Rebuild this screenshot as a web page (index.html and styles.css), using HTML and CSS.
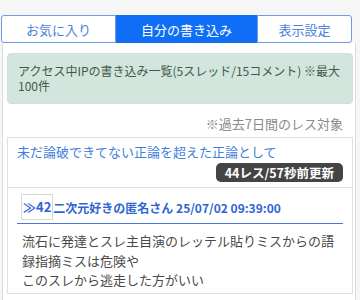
FILE: index.html
```html
<!DOCTYPE html>
<html lang="ja">

<head>
    <meta charset="utf-8" />
    <title>自分の書き込み</title>
    <link rel="stylesheet" href="styles.css">
</head>

<body>
    <div class="tabs">
        <a class="tab tab-fav">お気に入り</a>
        <a class="tab tab-mine active">自分の書き込み</a>
        <a class="tab tab-view">表示設定</a>
    </div>
    <div class="main">
        <div class="alert">アクセス中IPの書き込み一覧(5スレッド/15コメント) ※最大100件</div>
        <div class="note">※過去7日間のレス対象</div>
        <div class="thread">
            <div class="thread-head">
                <a class="thread-title">未だ論破できてない正論を超えた正論として</a>
                <div class="badge-row"><span class="badge">44レス/57秒前更新</span></div>
            </div>
            <div class="post">
                <div class="post-head">
                    <span class="res-no">≫42</span><span class="post-name">二次元好きの匿名さん 25/07/02 09:39:00</span>
                </div>
                <div class="post-body">流石に発達とスレ主自演のレッテル貼りミスからの語録指摘ミスは危険や<br>このスレから逃走した方がいい</div>
            </div>
        </div>
    </div>
</body>

</html>
```

FILE: styles.css
```css
body {
    margin: 0;
    background: #f6f6f6;
    font-family: "Noto Sans CJK JP", "Noto Sans", sans-serif;
    color: #444;
}

.tabs {
    display: flex;
    margin: 15px 0 0 1px;
    width: 351px;
    height: 28px;
}

.tab {
    display: flex;
    align-items: center;
    justify-content: center;
    box-sizing: border-box;
    font-size: 13px;
    color: #4a82dc;
    background: #fff;
    border: 1px solid #6f9be6;
}

.tab-fav {
    width: 115px;
    border-radius: 3px 0 0 3px;
}

.tab-mine {
    width: 141px;
}

.tab-view {
    width: 95px;
    border-radius: 0 3px 3px 0;
}

.tab.active {
    background: #106ef6;
    border-color: #106ef6;
    color: #fff;
}

.main {
    margin: 0 4px 0 2px;
    padding: 10px 2px 0 4px;
    background: #fff;
    border-left: 1px solid #dcdcdc;
    border-right: 1px solid #dcdcdc;
    height: 247px;
}

.alert {
    background: #d3e6dd;
    border: 1px solid #cde2d8;
    border-radius: 4px;
    padding: 9px 10px 10px 10px;
    font-size: 12px;
    line-height: 15px;
    color: #3f5a4c;
}

.note {
    text-align: right;
    font-size: 13px;
    line-height: 20px;
    color: #8a8a8a;
    padding: 10px 10px 3px 0;
}

.thread {
    border: 1px solid #e0e0e0;
}

.thread-head {
    padding: 5px 9px 5px 9px;
    border-bottom: 1px solid #e0e0e0;
}

.thread-title {
    display: block;
    font-size: 13px;
    line-height: 18px;
    color: #3f7fdc;
}

.badge-row {
    display: flex;
    justify-content: flex-end;
    margin-top: 2px;
}

.badge {
    background: #444;
    color: #fff;
    font-size: 12.5px;
    font-weight: bold;
    line-height: 19px;
    padding: 0 9px;
    border-radius: 5px;
}

.post {
    padding: 0 9px 3px 9px;
}

.post-head {
    display: flex;
    align-items: center;
    padding: 6px 0 3px 4px;
    border-bottom: 1px solid #4a76d8;
    color: #2f64d4;
    font-size: 13px;
    font-weight: bold;
}

.res-no {
    border: 1px solid #d8d8d8;
    padding: 0 1px;
    line-height: 24px;
}

.post-name {
    font-size: 12px;
}

.post-body {
    padding: 7px 0 0 5px;
    font-size: 13px;
    line-height: 19.5px;
    color: #4a4a4a;
}
```
